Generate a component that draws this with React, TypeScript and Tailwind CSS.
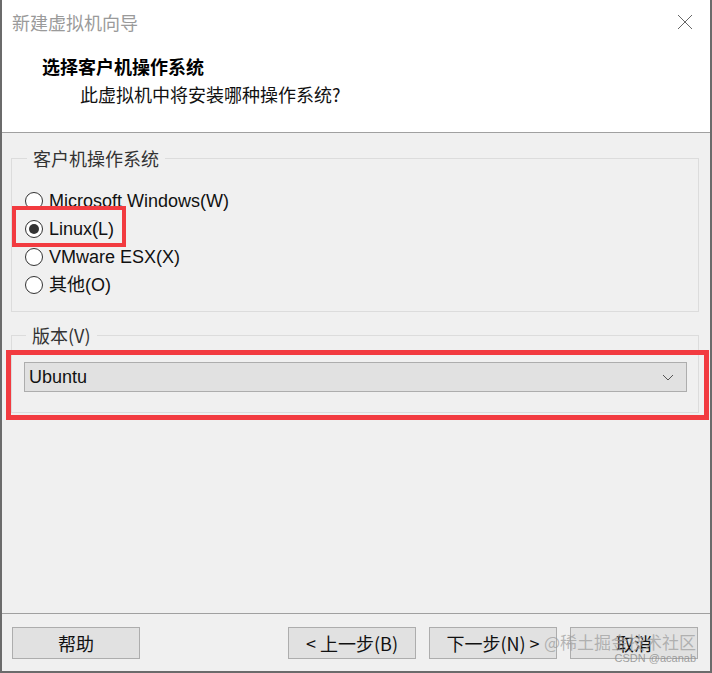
import React, { useState } from 'react';

const font = { fontFamily: '"Noto Sans CJK SC", "Liberation Sans", sans-serif' };
const latin = { fontFamily: '"Liberation Sans", "Noto Sans CJK SC", sans-serif' };

const options = [
    { id: 'win', label: 'Microsoft Windows(W)' },
    { id: 'linux', label: 'Linux(L)' },
    { id: 'esx', label: 'VMware ESX(X)' },
    { id: 'other', label: '其他(O)' },
];

const Radio: React.FC<{ checked: boolean }> = ({ checked }) => (
    <span className="w-[18px] h-[18px] rounded-full border border-[#333] bg-white flex items-center justify-center shrink-0">
        {checked && <span className="w-[10px] h-[10px] rounded-full bg-[#333]" />}
    </span>
);

const Button: React.FC<{ label: string }> = ({ label }) => (
    <button className="w-[128px] h-[32px] bg-[#e1e1e1] border border-[#adadad] text-[18px] text-[#111] leading-none">
        {label}
    </button>
);

const App: React.FC = () => {
    const [os, setOs] = useState('linux');

    return (
        <div className="w-[712px] h-[673px] bg-[#f0f0f0] border-x-2 border-b-2 border-[#6b6b6b] flex flex-col overflow-hidden" style={font}>
            {/* title + header */}
            <div className="h-[133px] bg-white border-b border-[#a0a0a0] shrink-0">
                <div className="h-[44px] flex items-center justify-between pl-[10px] pr-[17px]">
                    <span className="text-[18px] text-[#9a9a9a]">新建虚拟机向导</span>
                    <svg width="16" height="16" viewBox="0 0 16 16" className="text-[#666]">
                        <path d="M1 1 L15 15 M15 1 L1 15" stroke="currentColor" strokeWidth="1" fill="none" />
                    </svg>
                </div>
                <div className="pl-[40px] pt-[10px] text-[18px] leading-6 font-bold text-black">选择客户机操作系统</div>
                <div className="pl-[78px] mt-1 text-[18px] leading-6 text-[#111]">此虚拟机中将安装哪种操作系统?</div>
            </div>

            {/* body */}
            <fieldset className="ml-[9px] mr-[11px] mt-[13px] border border-[#dcdcdc] pl-[13px] pr-3 pt-[17px] pb-3">
                <legend className="ml-[2px] px-[6px] text-[18px] leading-6 text-[#333]">客户机操作系统</legend>
                {options.map((o) => (
                    <div
                        key={o.id}
                        className="relative h-[28px] flex items-center gap-[6px] cursor-pointer"
                        onClick={() => setOs(o.id)}
                    >
                        <Radio checked={os === o.id} />
                        <span className="text-[18px] leading-6 text-[#111]" style={latin}>{o.label}</span>
                        {o.id === 'linux' && (
                            <span className="absolute -left-[13px] -top-[9px] w-[114px] h-[41px] border-4 border-[#f23b40]" />
                        )}
                    </div>
                ))}
            </fieldset>

            <fieldset className="ml-[9px] mr-[11px] mt-[11px] border border-[#dcdcdc] pl-3 pr-[11px] pt-[15px] pb-5">
                <legend className="ml-[2px] px-[6px] text-[18px] leading-6 text-[#333]">版本(V)</legend>
                <div className="relative h-[30px] bg-[#e1e1e1] border border-[#adadad] flex items-center justify-between pl-[4px] pr-[12px]">
                    <span className="text-[18px] leading-6 text-[#111]" style={latin}>Ubuntu</span>
                    <svg width="12" height="7" viewBox="0 0 12 7" className="text-[#555]">
                        <path d="M1 1 L6 6 L11 1" stroke="currentColor" strokeWidth="1" fill="none" />
                    </svg>
                    <span className="absolute -left-[19px] -top-[13px] w-[703px] h-[70px] border-[5px] border-[#f23b40]" />
                </div>
            </fieldset>

            {/* footer */}
            <div className="mt-auto border-t border-[#a0a0a0] h-[58px] pt-[13px] pl-[10px] pr-[12px] flex items-start relative">
                <Button label="帮助" />
                <div className="ml-auto flex gap-[13px]">
                    <Button label="< 上一步(B)" />
                    <Button label="下一步(N) >" />
                    <Button label="取消" />
                </div>
                <div className="absolute right-[14px] top-[18px] flex flex-col items-end pointer-events-none">
                    <span className="text-[17px] leading-5 text-[#9a9a9a]/70">@稀土掘金技术社区</span>
                    <span className="text-[11px] leading-3 text-[#8a8a8a]/80" style={latin}>CSDN @acanab</span>
                </div>
            </div>
        </div>
    );
};

export default App;
